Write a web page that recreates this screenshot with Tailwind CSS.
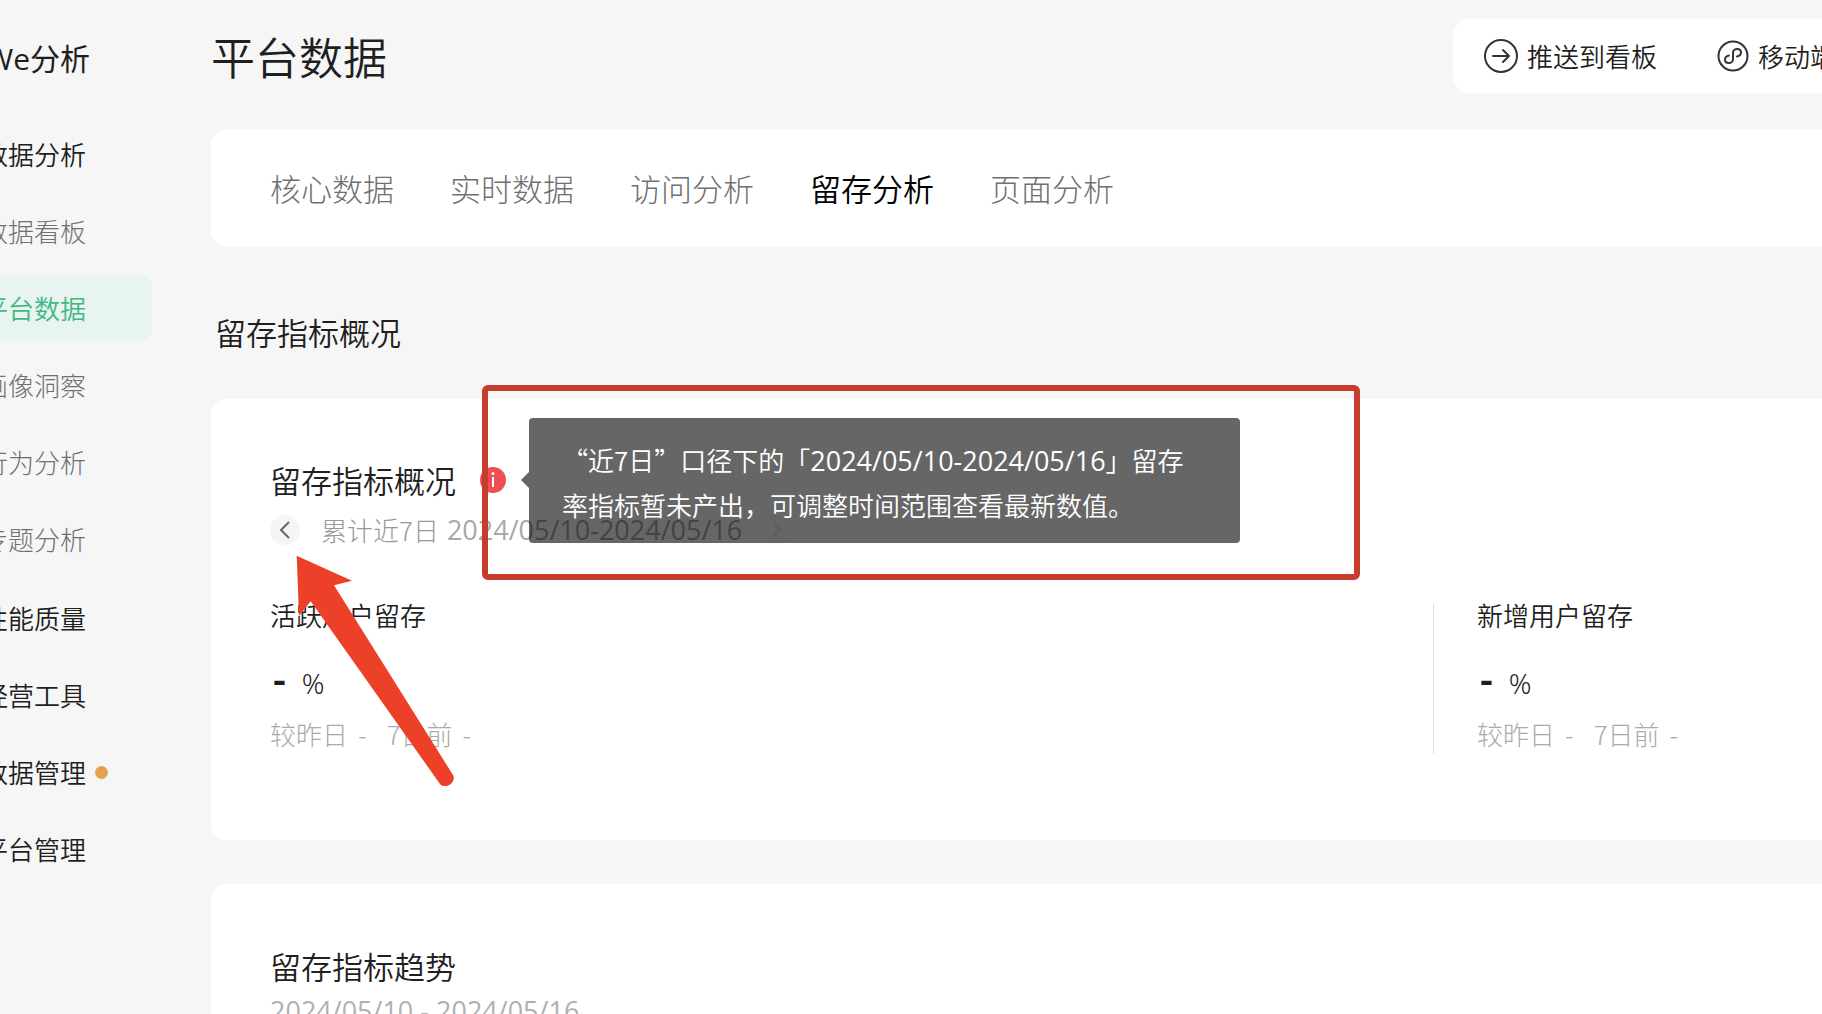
<!DOCTYPE html>
<html lang="zh-CN">
<head>
<meta charset="utf-8">
<meta name="viewport" content="width=device-width, initial-scale=1">
<title>We分析 - 平台数据</title>
<script src="https://cdn.jsdelivr.net/npm/@tailwindcss/browser@4"></script>
</head>
<body class="flex h-screen overflow-hidden bg-[#f6f6f6] font-['Noto_Sans_CJK_SC',sans-serif] font-[350] text-[26px] leading-10 text-[#1f1f1f] whitespace-nowrap">

<!-- Sidebar -->
<aside class="w-[152px] shrink-0 overflow-hidden">
  <div class="flex h-[121px] justify-end pt-[39px] pr-[62px] text-[30px] font-normal"><span class="font-['Open_Sans','Noto_Sans_CJK_SC',sans-serif]">We分析</span></div>
  <nav class="flex flex-col gap-[11px]" aria-label="主导航">
    <a href="#" class="flex h-[66px] items-center justify-end pr-[66px]">数据分析</a>
    <a href="#" class="flex h-[66px] items-center justify-end pr-[66px] font-light text-[#707070]">数据看板</a>
    <a href="#" aria-current="page" class="flex h-[66px] items-center justify-end rounded-r-xl bg-[#e8f4ef] pr-[66px] text-[#3fb883]">平台数据</a>
    <a href="#" class="flex h-[66px] items-center justify-end pr-[66px] font-light text-[#707070]">画像洞察</a>
    <a href="#" class="flex h-[66px] items-center justify-end pr-[66px] font-light text-[#707070]">行为分析</a>
    <a href="#" class="flex h-[66px] items-center justify-end pr-[66px] font-light text-[#707070]">专题分析</a>
    <a href="#" class="mt-0.5 flex h-[66px] items-center justify-end pr-[66px]">性能质量</a>
    <a href="#" class="flex h-[66px] items-center justify-end pr-[66px]">经营工具</a>
    <a href="#" class="flex h-[66px] items-center justify-end gap-[9px] pr-11">数据管理<span class="size-[13px] shrink-0 rounded-full bg-[#e5a24c]"></span></a>
    <a href="#" class="flex h-[66px] items-center justify-end pr-[66px]">平台管理</a>
  </nav>
</aside>

<main class="min-w-0 flex-1 pl-[59px]">
  <header class="flex h-[129px] items-start justify-between">
    <h1 class="pt-[26px] text-[44px] leading-[60px] font-[350]">平台数据</h1>
    <div class="mt-[19px] flex h-[74px] w-[369px] shrink-0 items-center gap-[60px] overflow-hidden rounded-l-2xl bg-white pl-[31px]">
      <button type="button" class="flex shrink-0 items-center gap-[9px]">
        <svg class="size-[34px]" viewBox="0 0 34 34" fill="none" stroke="#333" stroke-width="2" stroke-linecap="round" stroke-linejoin="round"><circle cx="17" cy="17" r="16"/><path d="M9 17h16M19 11l6 6-6 6"/></svg>
        推送到看板
      </button>
      <button type="button" class="flex shrink-0 items-center gap-[9px]">
        <svg class="size-8" viewBox="0 0 32 32" fill="none" stroke="#333" stroke-width="2" stroke-linecap="round"><circle cx="16" cy="16" r="14.500"/><path d="M12 15.500c-2.500.5-4 2-4 4s1.600 3.500 3.800 3.500 4.200-1.500 4.200-3.800v-6.400c0-2.300 2-3.800 4.200-3.800s3.800 1.500 3.800 3.500-1.500 3.500-4 4"/></svg>
        移动端
      </button>
    </div>
  </header>

  <nav class="flex h-[118px] items-center gap-14 rounded-l-2xl bg-white pl-[59px] text-[31px] font-light text-[#707070]" aria-label="数据类别">
    <a href="#">核心数据</a>
    <a href="#">实时数据</a>
    <a href="#">访问分析</a>
    <a href="#" aria-current="page" class="font-[350] text-black">留存分析</a>
    <a href="#">页面分析</a>
  </nav>

  <h2 class="flex h-[152px] items-center pt-[18px] pl-1 text-[31px]">留存指标概况</h2>

  <section class="relative h-[441px] rounded-l-2xl bg-white pt-[61px] pl-[59px]">
    <div class="flex items-center gap-6 text-[31px]">
      <h3>留存指标概况</h3>
      <svg class="size-[26px]" viewBox="0 0 26 26"><circle cx="13" cy="13" r="13" fill="#ee4f50"/><circle cx="13" cy="6.500" r="1.500" fill="#fff"/><path d="M13 10v10" stroke="#fff" stroke-width="2"/></svg>
    </div>
    <div class="mt-[10px] flex items-center font-light text-[#999]">
      <button type="button" aria-label="上一周期" class="flex size-[30px] items-center justify-center rounded-full bg-[#f5f5f5]">
        <svg class="h-5 w-3" viewBox="0 0 12 20" fill="none" stroke="#666" stroke-width="2"><path d="M10 2 2 10l8 8"/></svg>
      </button>
      <span class="ml-[21px]">累计近7日</span>
      <span class="ml-2 font-['Open_Sans',sans-serif] text-[27px] font-normal text-[#a8a8a8]">2024/05/10-2024/05/16</span>
      <button type="button" aria-label="下一周期" class="ml-5 flex size-[30px] items-center justify-center rounded-full bg-[#fdfdfd]">
        <svg class="h-4 w-2" viewBox="0 0 8 16" fill="none" stroke="#e4e4e4" stroke-width="2"><path d="m1 2 6 6-6 6"/></svg>
      </button>
    </div>

    <div class="mt-[45px] grid grid-cols-[1163px_1fr]">
      <div>
        <h4>活跃用户留存</h4>
        <p class="mt-7 flex items-center gap-4 pl-[3px] font-['Noto_Sans',sans-serif] text-[28px]"><b class="-mt-2 text-[40px] leading-10 font-semibold">-</b>%</p>
        <p class="mt-[11px] flex gap-5 font-light text-[#aaa]"><span class="flex gap-[10px]">较昨日 <span>-</span></span><span class="flex gap-[10px]">7日前 <span>-</span></span></p>
      </div>
      <div class="relative pl-[44px] before:absolute before:top-[9px] before:bottom-0 before:left-0 before:w-px before:bg-[#ddd]">
        <h4>新增用户留存</h4>
        <p class="mt-7 flex items-center gap-4 pl-[3px] font-['Noto_Sans',sans-serif] text-[28px]"><b class="-mt-2 text-[40px] leading-10 font-semibold">-</b>%</p>
        <p class="mt-[11px] flex gap-5 font-light text-[#aaa]"><span class="flex gap-[10px]">较昨日 <span>-</span></span><span class="flex gap-[10px]">7日前 <span>-</span></span></p>
      </div>
    </div>

    <!-- Tooltip of the info icon -->
    <div role="tooltip" class="absolute top-[19px] left-[318px] h-[125px] w-[711px] rounded-sm bg-black/60 pt-5 pl-[33px] leading-[44px] text-white before:absolute before:top-[54px] before:right-full before:border-y-8 before:border-r-8 before:border-y-transparent before:border-r-black/60">
      “近7日”口径下的「<span class="font-['Open_Sans',sans-serif] text-[27px] font-normal">2024/05/10-2024/05/16</span>」留存<br>率指标暂未产出，可调整时间范围查看最新数值。
    </div>
    <!-- Annotations: frame and arrow -->
    <div class="absolute -top-[14px] left-[271px] h-[195px] w-[878px] rounded-md border-6 border-[#c83c2e]"></div>
    <svg class="absolute top-[156px] left-[85px] h-[232px] w-[160px]" viewBox="0 0 160 232"><path d="M.7.7 56 25.700 38 30.300 157 220c3 5-3 12-9 11-2 0-3-1-4-2L14.700 46.300 3 61Z" fill="#ec4128"/></svg>
  </section>

  <section class="mt-11 h-[441px] rounded-l-2xl bg-white pt-[62px] pl-[59px]">
    <h3 class="text-[31px]">留存指标趋势</h3>
    <p class="mt-[5px] font-['Open_Sans',sans-serif] text-[27px] font-normal text-[#b0b0b0]">2024/05/10 - 2024/05/16</p>
  </section>
</main>
</body>
</html>
